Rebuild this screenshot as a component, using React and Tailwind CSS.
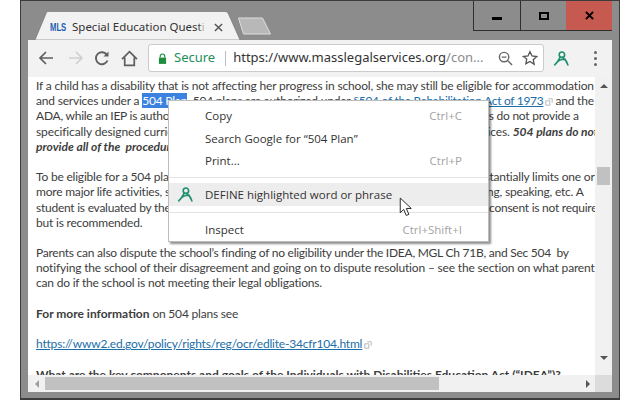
import React from "react";

const Logo = ({ className }) => (
  <svg viewBox="0 0 20 20" className={className} fill="none" stroke="#1f8f6f" strokeWidth="1.9" strokeLinecap="round">
    <circle cx="10.5" cy="5.500" r="3.200" />
    <path d="M8.500 8.500C6.500 12.500 4.500 15.500 2 17.500M11.500 8.800C14 11 16.500 14 17.500 17.500M3 16.500C6 12.500 10 10.500 14.500 11" />
  </svg>
);

const L = ({ children, className = "" }) => <div className={`h-[15.2px] whitespace-nowrap ${className}`}>{children}</div>;
const Ext = () => (
  <svg viewBox="0 0 10 10" className="inline-block w-[8px] h-[8px] mx-[2px] align-[-1px]" fill="none" stroke="#a8a8a8" strokeWidth="1">
    <path d="M1 3.500h5v5.500H1zM4 1h5v5" />
  </svg>
);
const A = ({ children }) => <span className="text-[#1b6ea8] underline">{children}</span>;

const Item = ({ label, hint, active, icon }) => (
  <div className={`flex items-center h-[23px] pl-[36px] pr-[26px] relative ${active ? "bg-[#ededed]" : ""}`}>
    {icon && <Logo className="absolute left-[8px] top-[3px] w-[17px] h-[17px]" />}
    <span className="flex-1 text-[#333]">{label}</span>
    {hint && <span className="text-[#a3a3a3]">{hint}</span>}
  </div>
);

export default function App() {
  return (
    <div className="w-[640px] h-[400px] bg-white pl-[20px] overflow-hidden">
      <div className="w-[600px] h-[400px] border border-[#3c3c3c] border-b-2 bg-[#8c8c8c] px-[7px] pb-[6px] flex flex-col font-['Noto_Sans',sans-serif]">
        {/* title bar */}
        <div className="relative h-[39px] shrink-0">
          <svg viewBox="0 0 250 29" className="absolute left-[6px] top-[10px] w-[250px] h-[29px]">
            <path d="M1 29 L12.500 1.500 Q13 0.500 15 0.500 H191 Q193 0.500 194 2 L206 29 Z" fill="#f2f2f2" stroke="#6e6e6e" strokeWidth="0.6" />
            <path d="M204.500 7 H228.500 L236.500 23 H209.500 Z" fill="#b8b8b8" stroke="#dedede" strokeWidth="1" strokeLinejoin="round" />
          </svg>
          <div className="absolute left-[22px] top-[16px] flex items-center h-[20px] text-[11.5px]">
            <span className="w-[22px] text-[11px] font-bold text-[#1d5fb3] font-['Liberation_Sans',sans-serif] origin-left scale-x-[0.7]">MLS</span>
            <span className="w-[134px] overflow-hidden whitespace-nowrap text-[#333]">Special Education Questi</span>
            <span className="w-[8px] h-[20px] -ml-[8px] bg-gradient-to-r from-transparent to-[#f2f2f2]" />
            <svg viewBox="0 0 10 10" className="w-[9px] h-[9px] ml-[8px]" stroke="#555" strokeWidth="1.6"><path d="M1 1l8 8M9 1l-8 8" /></svg>
          </div>
          <div className="absolute right-0 top-0 flex h-[30px] w-[139px] border-b border-[#2f2f2f]">
            <div className="flex-1 border-l border-[#2f2f2f] flex items-center justify-center"><div className="w-[10px] h-[3px] mt-[6px] bg-black" /></div>
            <div className="flex-1 border-l border-[#2f2f2f] flex items-center justify-center"><div className="w-[10px] h-[8px] border-2 border-black" /></div>
            <div className="flex-1 bg-[#c75a50] flex items-center justify-center">
              <svg viewBox="0 0 10 10" className="w-[9px] h-[9px]" stroke="#000" strokeWidth="2.2"><path d="M1 1l8 8M9 1l-8 8" /></svg>
            </div>
          </div>
        </div>
        {/* toolbar */}
        <div className="flex items-center h-[37px] shrink-0 bg-[#f2f2f2] pl-[10px] pb-[1px]">
          <svg viewBox="0 0 16 16" className="w-[16px] h-[16px]" fill="none" stroke="#5f5f5f" strokeWidth="1.7"><path d="M15 8H2M8 2L2 8l6 6" /></svg>
          <svg viewBox="0 0 16 16" className="w-[16px] h-[16px] ml-[14px]" fill="none" stroke="#d0d0d0" strokeWidth="1.7"><path d="M1 8h13M8 2l6 6-6 6" /></svg>
          <svg viewBox="0 0 16 16" className="w-[16px] h-[16px] ml-[10px]" fill="none" stroke="#5f5f5f" strokeWidth="1.9"><path d="M13.500 10.500A6 6 0 1 1 13 5" /><path d="M14.500 1.500v5h-5z" fill="#5f5f5f" stroke="none" /></svg>
          <svg viewBox="0 0 16 16" className="w-[17px] h-[17px] ml-[11px]" fill="none" stroke="#5f5f5f" strokeWidth="1.6"><path d="M1 8.500L8 1.500l7 7M3.500 7v7.500h9V7" /></svg>
          <div className="ml-[10px] w-[396px] h-[28px] bg-white border border-[#cbcbcb] rounded-[3px] flex items-center pl-[9px] pr-[5px] text-[13px]">
            <svg viewBox="0 0 10 12" className="w-[9px] h-[11px]" fill="#1e8e3e"><path d="M1 5h8v7H1z" /><path d="M2.500 5V3.500a2.500 2.500 0 0 1 5 0V5" fill="none" stroke="#1e8e3e" strokeWidth="1.3" /></svg>
            <span className="ml-[7px] text-[#1e8e5a]">Secure</span>
            <span className="ml-[10px] w-px h-[15px] bg-[#bdbdbd]" />
            <span className="ml-[7px] flex-1 whitespace-nowrap text-[#333]">https://www.masslegalservices.org<span className="text-[#8a8a8a]">/con...</span></span>
            <svg viewBox="0 0 16 16" className="w-[15px] h-[15px]" fill="none" stroke="#666" strokeWidth="1.5"><circle cx="6.500" cy="6.500" r="5" /><path d="M10 10l5 5M4 6.500h5" /></svg>
            <svg viewBox="0 0 24 24" className="w-[16px] h-[16px] ml-[9px]" fill="none" stroke="#555" strokeWidth="2"><path d="M12 2.500l3 6.400 7 .9-5.100 4.800 1.300 6.900L12 17.200 5.800 20.500l1.300-6.900L2 9.800l7-.9z" /></svg>
          </div>
          <Logo className="w-[17px] h-[17px] ml-[9px]" />
          <div className="ml-[24px] flex flex-col gap-[3px]">
            <span className="w-[3px] h-[3px] rounded-full bg-[#666]" /><span className="w-[3px] h-[3px] rounded-full bg-[#666]" /><span className="w-[3px] h-[3px] rounded-full bg-[#666]" />
          </div>
        </div>
        {/* viewport */}
        <div className="relative flex-1 min-h-0 bg-white flex flex-col">
          <div className="flex flex-1 min-h-0">
            <div className="flex-1 min-w-0 overflow-hidden pl-[8px] pt-[1px] text-[12px] tracking-[-0.2px] leading-[15.2px] text-[#3d3d3d] font-['Lato',sans-serif]">
              <L className="tracking-[-0.17px]">If a child has a disability that is not affecting her progress in school, she may still be eligible for accommodation</L>
              <L>and services under a <span className="bg-[#3b82e0] text-white">504 Plan</span>. 504 plans are authorized under <span className="tracking-[-0.3px]"><A>§504 of the Rehabilitation Act of 1973</A></span><Ext />and the</L>
              <L className="tracking-[-0.24px]">ADA, while an IEP is authorized under the IDEA. One important difference is that 504 plans do not provide a</L>
              <L className="tracking-[-0.12px]">specifically designed curriculum or specialized instruction and other related support services. <b className="tracking-normal"><i>504 plans do not</i></b></L>
              <L className="font-bold italic tracking-normal">provide all of the&nbsp; procedural safeguards of the IDEA.</L>
              <L>&nbsp;</L>
              <L>To be eligible for a 504 plan, a child must have a physical or a mental impairment that substantially limits one or</L>
              <L>more major life activities, such as caring for oneself, walking, seeing, eating, hearing, learning, speaking, etc. A</L>
              <L className="tracking-[-0.25px]">student is evaluated by the school team to determine eligibility for a plan. Written parental consent is not require</L>
              <L>but is recommended.</L>
              <L>&nbsp;</L>
              <L className="tracking-[-0.25px]">Parents can also dispute the school’s finding of no eligibility under the IDEA, MGL Ch 71B, and Sec 504&nbsp; by</L>
              <L className="tracking-[-0.17px]">notifying the school of their disagreement and going on to dispute resolution – see the section on what parent</L>
              <L>can do if the school is not meeting their legal obligations.</L>
              <L>&nbsp;</L>
              <L><b className="tracking-normal">For more information</b> on 504 plans see</L>
              <L>&nbsp;</L>
              <L><A>https://www2.ed.gov/policy/rights/reg/ocr/edlite-34cfr104.html</A><Ext /></L>
              <L>&nbsp;</L>
              <L className="font-bold tracking-normal">What are the key components and goals of the Individuals with Disabilities Education Act (“IDEA”)?</L>
            </div>
            <div className="w-[17px] shrink-0 bg-[#f1f1f1] flex flex-col items-center justify-between pt-[7px] pb-[15px]">
              <div className="w-0 h-0 border-x-[4px] border-x-transparent border-b-[4px] border-b-[#555]" />
              <div className="w-[13px] h-[18px] bg-[#c1c1c1] mb-[168px] mt-[76px]" />
              <div className="w-0 h-0 border-x-[4px] border-x-transparent border-t-[4px] border-t-[#555]" />
            </div>
          </div>
          <div className="h-[17px] shrink-0 flex items-center bg-[#f1f1f1]">
            <div className="w-[17px] flex justify-center"><div className="w-0 h-0 border-y-[4px] border-y-transparent border-r-[4px] border-r-[#a0a0a0]" /></div>
            <div className="w-[394px] h-[13px] bg-[#c1c1c1]" />
            <div className="flex-1 flex justify-end pr-[5px]"><div className="w-0 h-0 border-y-[4px] border-y-transparent border-l-[4px] border-l-[#555]" /></div>
            <div className="w-[17px] h-[17px] bg-[#dcdcdc]" />
          </div>
          {/* context menu */}
          <div className="absolute left-[140px] top-[23px] w-[321px] h-[142px] bg-white border border-[#bdbdbd] shadow-[2px_2px_2px_rgba(0,0,0,0.45)] pt-[3px] text-[11.5px] font-['Open_Sans',sans-serif]">
            <Item label="Copy" hint="Ctrl+C" />
            <Item label="Search Google for “504 Plan”" />
            <div className="-mt-px"><Item label="Print..." hint="Ctrl+P" /></div>
            <div className="h-px bg-[#e3e3e3] mt-[5px] mb-[5px]" />
            <Item label="DEFINE highlighted word or phrase" active icon />
            <div className="h-px bg-[#e3e3e3] mt-[6px] mb-[5px]" />
            <Item label="Inspect" hint="Ctrl+Shift+I" />
          </div>
          <svg viewBox="0 0 12 19" className="absolute left-[371px] top-[120px] w-[13px] h-[20px]" fill="#fff" stroke="#222" strokeWidth="0.9" strokeLinejoin="round"><path d="M1 1v14l3.300-3.200 2.400 5.700 2.500-1-2.400-5.600h4.700z" /></svg>
        </div>
      </div>
    </div>
  );
}
